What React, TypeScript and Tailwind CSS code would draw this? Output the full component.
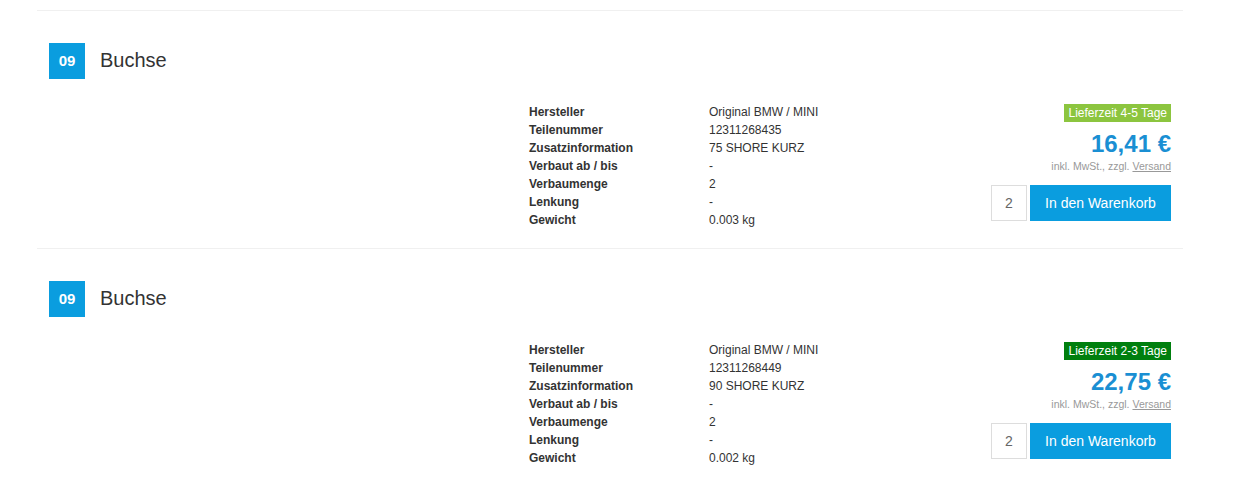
import React from "react";

type Item = {
  part: string;
  info: string;
  weight: string;
  price: string;
  delivery: string;
  deliveryColor: string;
};

const items: Item[] = [
  { part: "12311268435", info: "75 SHORE KURZ", weight: "0.003 kg", price: "16,41 €", delivery: "Lieferzeit 4-5 Tage", deliveryColor: "light" },
  { part: "12311268449", info: "90 SHORE KURZ", weight: "0.002 kg", price: "22,75 €", delivery: "Lieferzeit 2-3 Tage", deliveryColor: "dark" },
];

function Row({ item }: { item: Item }) {
  const rows: [string, string][] = [
    ["Hersteller", "Original BMW / MINI"],
    ["Teilenummer", item.part],
    ["Zusatzinformation", item.info],
    ["Verbaut ab / bis", "-"],
    ["Verbaumenge", "2"],
    ["Lenkung", "-"],
    ["Gewicht", item.weight],
  ];
  return (
    <div className="border-t border-[#f0f0f0] px-3 pt-8 pb-[19px]">
      <div className="flex items-center h-9">
        <div className="w-9 h-9 bg-[#0a9ddf] text-white font-bold text-[15px] flex items-center justify-center">09</div>
        <div className="ml-[15px] text-[20px] leading-[24px] -mt-[2px] text-[#333]">Buchse</div>
      </div>
      <div className="flex mt-6">
        <div className="w-[480px] shrink-0" />
        <div className="w-[400px] shrink-0">
          {rows.map(([k, v]) => (
            <div key={k} className="flex h-[18px] leading-[18px] text-[12px] text-[#333]">
              <div className="w-[180px] font-bold">{k}</div>
              <div>{v}</div>
            </div>
          ))}
        </div>
        <div className="flex-1 flex flex-col items-end">
          <div
            className={
              "mt-px h-[18px] leading-[18px] px-[4px] text-[12px] text-white " +
              (item.deliveryColor === "light" ? "bg-[#8cc53f]" : "bg-[#007f0e]")
            }
          >
            {item.delivery}
          </div>
          <div className="mt-[8px] text-[24px] leading-[28px] font-bold text-[#1a8fd3]">{item.price}</div>
          <div className="mt-[1px] text-[10.5px] leading-[14px] text-[#999]">
            inkl. MwSt., zzgl. <span className="underline">Versand</span>
          </div>
          <div className="flex mt-[12px]">
            <div className="w-9 h-9 border border-[#ddd] text-[#666] text-[14px] flex items-center justify-center">2</div>
            <div className="ml-[3px] w-[141px] h-9 bg-[#0a9ddf] text-white text-[14px] flex items-center justify-center">
              In den Warenkorb
            </div>
          </div>
        </div>
      </div>
    </div>
  );
}

export default function App() {
  return (
    <div className="bg-white w-[1250px] h-[487px] overflow-hidden" style={{ fontFamily: '"Liberation Sans", Arial, sans-serif' }}>
      <div className="ml-[37px] w-[1146px] pt-[10px]">
        {items.map((it) => (
          <Row key={it.part} item={it} />
        ))}
      </div>
    </div>
  );
}
